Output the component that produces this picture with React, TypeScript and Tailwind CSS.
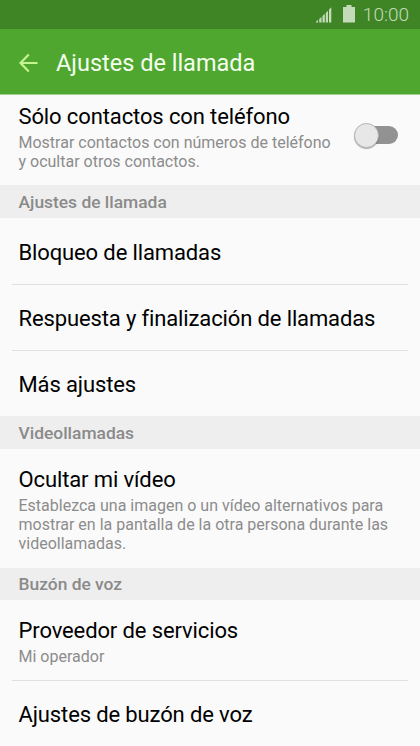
import React from "react";

function Section({ title, height }: { title: string; height: string }) {
  return (
    <div className={`flex shrink-0 items-center bg-[#eeeeee] pl-[18.5px] pt-px text-[17.4px] font-medium text-[#8a8a8a] ${height}`}>
      {title}
    </div>
  );
}

function Row({ title, box }: { title: string; box: string }) {
  return (
    <div className={`mx-3 flex shrink-0 items-center border-[#e0e0e0] pl-[6.5px] text-[22px] tracking-[-0.13px] ${box}`}>
      {title}
    </div>
  );
}

export default function App() {
  return (
    <div className="flex h-[746px] w-[420px] flex-col overflow-hidden bg-[#fafafa] font-[Roboto,sans-serif] text-black">
      <div className="flex h-[29px] shrink-0 items-center justify-end bg-[#3f8526] pr-[11px] text-[#c3dbb9]">
        <svg className="mr-[11px] mt-px h-[16px] w-[16px]" viewBox="0 0 16 16" fill="currentColor">
          <path d="M0 15.500v-1l2-1.500v2.500zM3.200 15.500v-3.500l2.300-2v5.500zM6.500 15.500v-6.500l2.300-2.200v8.700zM9.800 15.500V6l2.200-2.300v11.800zM13 15.500V2.500l2.300-2.300v15.300z" />
        </svg>
        <svg className="mb-px mr-[8px] h-[18px] w-[12px]" viewBox="0 0 12 18" fill="currentColor">
          <path d="M3.500 0h5v2H12v15.500H0V2h3.500z" />
        </svg>
        <span className="pt-px text-[19px] font-light leading-6">10:00</span>
      </div>
      <div className="flex h-[66px] shrink-0 items-center border-b border-[#a3d18f] bg-[#50a72f] pl-[19px] text-[#f5fff0]">
        <svg className="mt-0.5 h-5 w-[19px]" viewBox="0 0 19 20" fill="none" stroke="#c5f593" strokeWidth="2.2">
          <path d="M18.500 10H2M9.800 1.500L1.500 10l8.300 8.500" />
        </svg>
        <h1 className="ml-[18px] pt-[4px] text-[23.5px]">Ajustes de llamada</h1>
      </div>
      <div className="flex h-[90px] shrink-0 justify-between pl-[18.5px] pr-[22px]">
        <div className="pt-[8px]">
          <div className="text-[22px] leading-[28px] tracking-[-0.12px]">Sólo contactos con teléfono</div>
          <p className="mt-[2px] text-[16px] leading-[19px] text-[#8c8c8c]">Mostrar contactos con números de teléfono<br />y ocultar otros contactos.</p>
        </div>
        <div className="mt-[31px] flex h-[18px] w-[39px] items-center rounded-full bg-[#929292]">
          <div className="-ml-[5px] h-[25px] w-[25px] shrink-0 rounded-full border border-[#b5b5b5] bg-[#e7e7e7] shadow-[0_1px_1px_rgba(0,0,0,0.3)]" />
        </div>
      </div>
      <Section title="Ajustes de llamada" height="h-[33px]" />
      <Row title="Bloqueo de llamadas" box="h-[67px] border-b pt-[2px]" />
      <Row title="Respuesta y finalización de llamadas" box="h-[66px] border-b pt-[2px]" />
      <Row title="Más ajustes" box="h-[65px] pt-[2px]" />
      <Section title="Videollamadas" height="h-[33px]" />
      <div className="h-[119px] shrink-0 pl-[18.5px] pt-[17px]">
        <div className="text-[22px] leading-[28px] tracking-[-0.12px]">Ocultar mi vídeo</div>
        <p className="mt-[2px] text-[16px] leading-[19px] text-[#8c8c8c]">Establezca una imagen o un vídeo alternativos para<br />mostrar en la pantalla de la otra persona durante las<br />videollamadas.</p>
      </div>
      <Section title="Buzón de voz" height="h-[32px]" />
      <div className="mx-3 h-[81px] shrink-0 border-b border-[#e0e0e0] pl-[6.5px] pt-[17px]">
        <div className="text-[22px] leading-[28px] tracking-[-0.12px]">Proveedor de servicios</div>
        <p className="text-[16px] leading-[24px] text-[#8c8c8c]">Mi operador</p>
      </div>
      <Row title="Ajustes de buzón de voz" box="h-[66px]" />
    </div>
  );
}
